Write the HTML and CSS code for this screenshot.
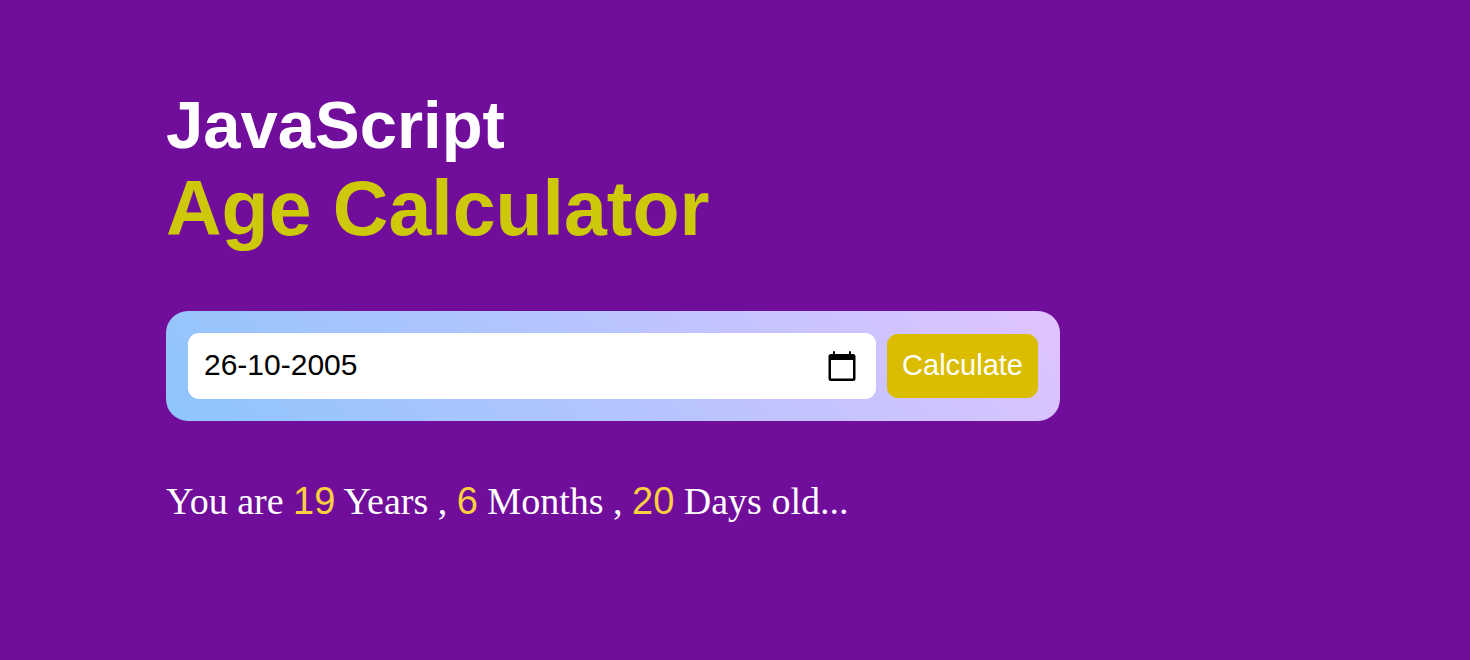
FILE: index.html
```html
<!DOCTYPE html>
<html lang="en">
<head>
  <meta charset="utf-8">
  <title>Age Calculator</title>
  <link rel="stylesheet" href="styles.css">
</head>
<body>
  <main class="calculator">
    <h1 class="title">JavaScript <span class="title-accent">Age Calculator</span></h1>
    <form class="input-box">
      <div class="date-field">
        <input class="date-input" type="text" value="26-10-2005" aria-label="Date of birth">
        <button class="date-picker" type="button" aria-label="Open calendar">
          <svg class="calendar-icon" viewBox="0 0 28 30" aria-hidden="true">
            <path fill-rule="evenodd" d="M5 1a1 1 0 0 1 2 0v2h14V1a1 1 0 0 1 2 0v2h2a2.500 2.500 0 0 1 2.500 2.500v22a2.500 2.500 0 0 1-2.500 2.500H3a2.500 2.500 0 0 1-2.500-2.500v-22A2.500 2.500 0 0 1 3 3h2zM3 9v18.500h22V9z"/>
          </svg>
        </button>
      </div>
      <button class="calculate" type="button">Calculate</button>
    </form>
    <p class="result">You are <span class="value">19</span> Years , <span class="value">6</span> Months , <span class="value">20</span> Days old...</p>
  </main>
</body>
</html>
```

FILE: styles.css
```css
* {
  box-sizing: border-box;
  margin: 0;
  padding: 0;
}

body {
  min-height: 100vh;
  background: #710d9b;
  color: #fff;
}

.calculator {
  max-width: 1060px;
  padding: 86px 0 0 166px;
}

.title {
  font: bold 67px/78px "Liberation Sans", Arial, sans-serif;
}

.title-accent {
  display: block;
  color: #cdc90a;
  font-size: 77px;
  line-height: 88px;
}

.input-box {
  display: flex;
  align-items: center;
  gap: 11px;
  margin-top: 59px;
  padding: 22px;
  border-radius: 22px;
  background: linear-gradient(45deg, #8ec5fc, #e0c3ff);
}

.date-field {
  display: flex;
  flex: 1;
  align-items: center;
  height: 66px;
  padding: 0 20px 0 16px;
  border-radius: 11px;
  background: #fff;
}

.date-input {
  flex: 1;
  min-width: 0;
  padding-bottom: 2px;
  border: 0;
  outline: 0;
  background: none;
  color: #000;
  font: 30px/34px "Liberation Sans", Arial, sans-serif;
}

.date-picker {
  display: flex;
  border: 0;
  background: none;
}

.calendar-icon {
  width: 28px;
  height: 30px;
}

.calculate {
  height: 64px;
  padding: 0 15px 2px;
  border: 0;
  border-radius: 11px;
  background: #dabd00;
  color: #fff;
  font: 29px/34px "Liberation Sans", Arial, sans-serif;
}

.result {
  margin-top: 58px;
  font: 38px/44px "Liberation Serif", "Times New Roman", serif;
}

.value {
  color: #fbd03f;
  font-family: "Liberation Sans", Arial, sans-serif;
}
```
